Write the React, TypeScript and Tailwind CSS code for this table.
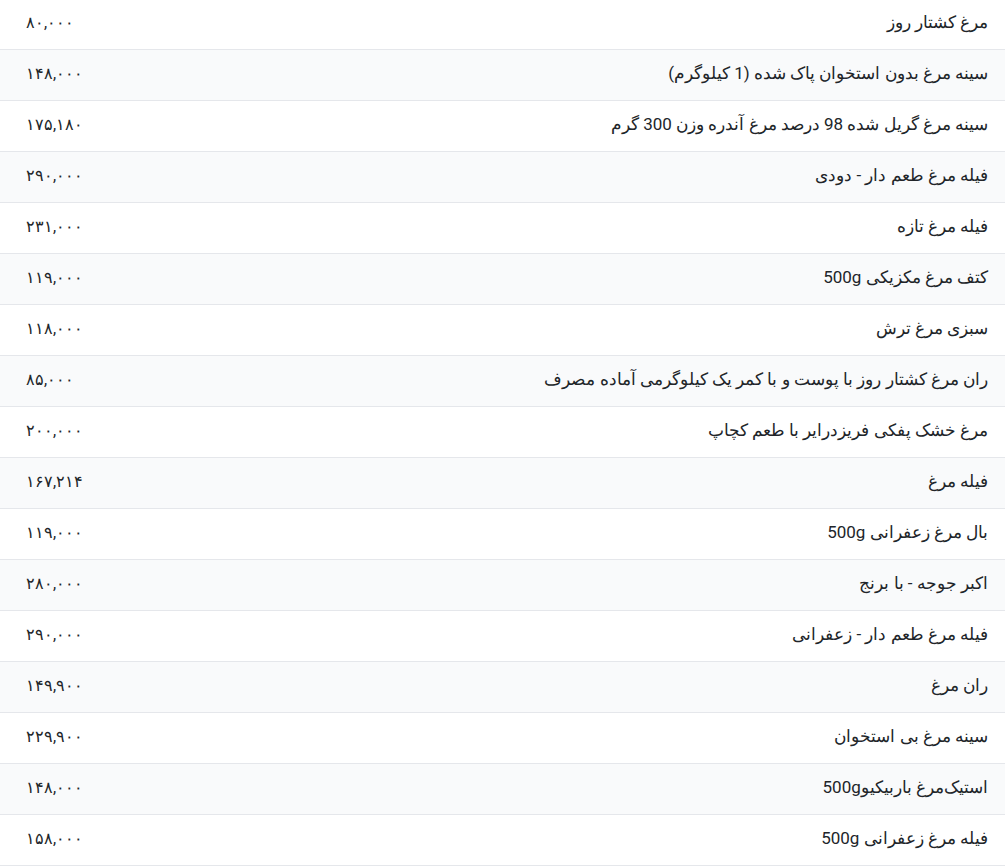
const items: [string, string][] = [
  ["مرغ کشتار روز", "۸۰,۰۰۰"],
  ["سینه مرغ بدون استخوان پاک شده (1 کیلوگرم)", "۱۴۸,۰۰۰"],
  ["سینه مرغ گریل شده 98 درصد مرغ آندره وزن 300 گرم", "۱۷۵,۱۸۰"],
  ["فیله مرغ طعم دار - دودی", "۲۹۰,۰۰۰"],
  ["فیله مرغ تازه", "۲۳۱,۰۰۰"],
  ["کتف مرغ مکزیکی 500g", "۱۱۹,۰۰۰"],
  ["سبزی مرغ ترش", "۱۱۸,۰۰۰"],
  ["ران مرغ کشتار روز با پوست و با کمر یک کیلوگرمی آماده مصرف", "۸۵,۰۰۰"],
  ["مرغ خشک پفکی فریزدرایر با طعم کچاپ", "۲۰۰,۰۰۰"],
  ["فیله مرغ", "۱۶۷,۲۱۴"],
  ["بال مرغ زعفرانی 500g", "۱۱۹,۰۰۰"],
  ["اکبر جوجه - با برنج", "۲۸۰,۰۰۰"],
  ["فیله مرغ طعم دار - زعفرانی", "۲۹۰,۰۰۰"],
  ["ران مرغ", "۱۴۹,۹۰۰"],
  ["سینه مرغ بی استخوان", "۲۲۹,۹۰۰"],
  ["استیک‌مرغ باربیکیو500g", "۱۴۸,۰۰۰"],
  ["فیله مرغ زعفرانی 500g", "۱۵۸,۰۰۰"],
];

export default function App() {
  return (
    <div className="min-h-screen bg-white font-['Roboto',sans-serif] text-[17px] text-[#212529]">
      <div dir="rtl">
        {items.map(([name, price], i) => (
          <div
            key={i}
            className={`flex items-center justify-between border-b border-[#e5e7eb] pr-[17px] pb-[3px] pl-[26px] ${
              i === 0 ? "h-[50px]" : "h-[51px]"
            } ${i % 2 === 1 ? "bg-[#f9fafb]" : "bg-white"}`}
          >
            <span>{name}</span>
            <span className="text-[16px]">{price}</span>
          </div>
        ))}
      </div>
    </div>
  );
}
